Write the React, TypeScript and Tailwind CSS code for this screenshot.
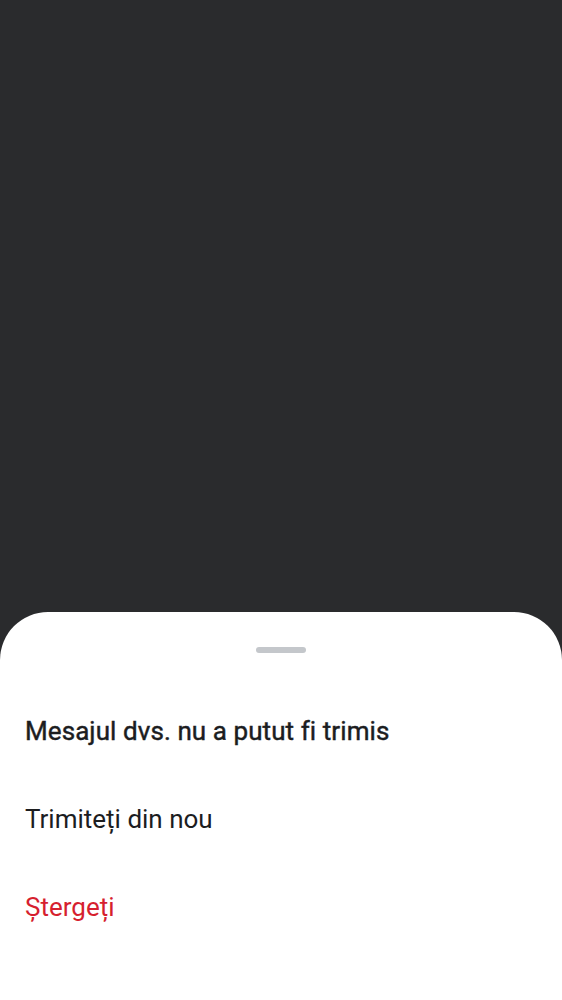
import React from "react";

export default function App() {
  return (
    <div
      className="w-[562px] h-[1000px] flex flex-col bg-[#2a2b2d] overflow-hidden"
      style={{ fontFamily: "Roboto, 'Noto Sans', sans-serif" }}
    >
      <div className="h-[612px] shrink-0" />
      <div className="flex-1 bg-white rounded-t-[48px] flex flex-col">
        <div className="pt-[35px] flex justify-center">
          <div className="w-[50px] h-[6px] rounded-full bg-[#c4c7cb]" />
        </div>
        <div className="mt-[34px] flex flex-col">
          <div className="h-[88px] flex items-center px-[25px] text-[26px] font-normal text-[#1c1d1f] tracking-[0.08px] [-webkit-text-stroke:0.45px_#1c1d1f]">
            Mesajul dvs. nu a putut fi trimis
          </div>
          <div className="h-[88px] flex items-center px-[25px] text-[26px] text-[#1c1d1f]">
            Trimiteți din nou
          </div>
          <div className="h-[88px] flex items-center px-[25px] text-[26px] text-[#d61f2f]">
            Ștergeți
          </div>
        </div>
      </div>
    </div>
  );
}
